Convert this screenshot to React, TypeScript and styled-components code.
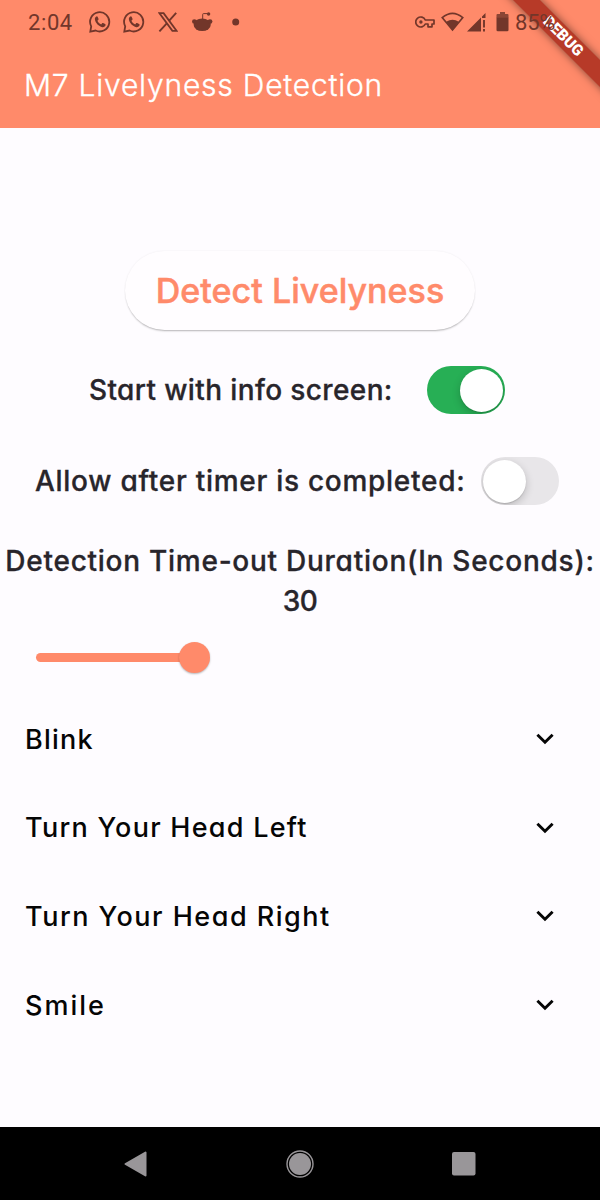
import React, { useState } from "react";
import styled, { createGlobalStyle } from "styled-components";

const CORAL = "#ff8a6a";
const STATUS = "#72362a";

const GlobalStyle = createGlobalStyle`
  *, *::before, *::after { box-sizing: border-box; }
  body { margin: 0; background: #fefcff; }
  button { font: inherit; border: 0; padding: 0; background: none; cursor: pointer; }
`;

const Screen = styled.div`
  position: relative;
  width: 600px;
  height: 1200px;
  display: flex;
  flex-direction: column;
  overflow: hidden;
  background: #fefcff;
  color: #28252b;
  font-family: Inter, "Open Sans", sans-serif;
  font-feature-settings: "cv11" 1;
  white-space: nowrap;
`;

const Header = styled.header`
  height: 128px;
  background: ${CORAL};
`;

const StatusBar = styled.div`
  position: relative;
  z-index: 2;
  height: 44px;
  padding: 0 43px 0 28px;
  display: flex;
  align-items: center;
  justify-content: space-between;
  color: ${STATUS};
  font-family: Roboto, sans-serif;
  font-size: 22px;
`;

const StatusGroup = styled.div`
  display: flex;
  align-items: center;
`;

const Clock = styled.span`
  width: 61px;
  letter-spacing: 0.6px;
`;

const Battery = styled.span`
  width: 42px;
  letter-spacing: -0.2px;
`;

const StatusIcon = styled.svg<{ $gap?: number }>`
  display: block;
  flex: none;
  margin-right: ${(p) => p.$gap ?? 0}px;
`;

const Title = styled.h1`
  margin: 0;
  padding-left: 24px;
  color: #fff;
  font-size: 30px;
  font-weight: 300;
  line-height: 82px;
  letter-spacing: 0.78px;
  -webkit-text-stroke: 0.35px #fff;
`;

const RibbonCorner = styled.div`
  position: absolute;
  z-index: 1;
  top: 0;
  right: 0;
  width: 120px;
  height: 120px;
  overflow: hidden;
  pointer-events: none;
`;

const Ribbon = styled.div`
  position: absolute;
  left: -17px;
  top: 27px;
  width: 200px;
  height: 19px;
  transform: rotate(45deg);
  background: #b73a28;
  box-shadow: 0 0 9px rgba(0, 0, 0, 0.5);
  color: #fff;
  font-family: Roboto, sans-serif;
  font-size: 15.5px;
  font-weight: 900;
  line-height: 19px;
  text-align: center;
`;

const Content = styled.main`
  flex: 1;
  display: flex;
  flex-direction: column;
  padding-top: 123px;
`;

const DetectButton = styled.button`
  && {
    align-self: center;
    width: 350px;
    height: 79px;
    border-radius: 40px;
    background: #fffdff;
    box-shadow: 0 2px 2px -1px rgba(0, 0, 0, 0.28), 0 0 2px rgba(0, 0, 0, 0.07);
    color: ${CORAL};
    font-size: 34px;
    font-weight: 500;
    letter-spacing: 0.03px;
    -webkit-text-stroke: 0.5px ${CORAL};
  }
`;

const SettingRow = styled.div<{ $top: number; $left: number; $gap: number }>`
  height: 48px;
  margin-top: ${(p) => p.$top}px;
  padding-left: ${(p) => p.$left}px;
  display: flex;
  align-items: center;
  gap: ${(p) => p.$gap}px;
`;

const Label = styled.span<{ $width: number; $spacing: number }>`
  width: ${(p) => p.$width}px;
  font-size: 28px;
  font-weight: 500;
  line-height: 44px;
  letter-spacing: ${(p) => p.$spacing}px;
  -webkit-text-stroke: 0.3px #28252b;
  padding-bottom: 1px;
`;

const Switch = styled.button<{ $on: boolean }>`
  && {
    display: flex;
    align-items: center;
    justify-content: ${(p) => (p.$on ? "flex-end" : "flex-start")};
    width: 78px;
    height: 48px;
    padding: ${(p) => (p.$on ? "0 2px 0 0" : "0 0 0 2px")};
    border-radius: 24px;
    overflow: hidden;
    background: ${(p) => (p.$on ? "#27af55" : "#e8e6e9")};
  }
`;

const Knob = styled.span`
  width: 43px;
  height: 43px;
  border-radius: 50%;
  background: #fff;
  box-shadow: 0 3px 9px rgba(0, 0, 0, 0.2), 0 1px 1px rgba(0, 0, 0, 0.12);
`;

const Timeout = styled.div`
  margin-top: 36px;
  text-align: center;
  font-size: 28px;
  font-weight: 500;
  line-height: 40px;
  -webkit-text-stroke: 0.3px #28252b;
`;

const TimeoutLine = styled.div<{ $spacing: number }>`
  letter-spacing: ${(p) => p.$spacing}px;
`;

const Slider = styled.div`
  display: flex;
  align-items: center;
  height: 31px;
  margin: 21px 0 0 36px;
`;

const Track = styled.div`
  width: 150px;
  height: 9px;
  border-radius: 5px;
  background: ${CORAL};
`;

const Thumb = styled.div`
  width: 31px;
  height: 31px;
  margin-left: -7px;
  border-radius: 50%;
  background: ${CORAL};
  box-shadow: 0 1px 2px rgba(0, 0, 0, 0.28);
`;

const List = styled.div`
  display: flex;
  flex-direction: column;
  margin-top: 22px;
`;

const ListItem = styled.button`
  && {
    display: flex;
    align-items: center;
    justify-content: space-between;
    height: 88.6px;
    padding: 0 46px 0 25px;
    color: #050505;
    font-size: 27px;
    font-weight: 500;
  }
`;

const ItemLabel = styled.span<{ $spacing: number }>`
  letter-spacing: ${(p) => p.$spacing}px;
`;

const NavBar = styled.nav`
  height: 73px;
  padding: 0 124px;
  display: flex;
  align-items: center;
  justify-content: space-between;
  background: #000;
`;

const WhatsApp = ({ gap }: { gap: number }) => (
  <StatusIcon $gap={gap} width="22" height="22" viewBox="0 0 22 22">
    <path d="M1.3 20.7 2.2 15.3A9.6 9.6 0 1 1 6.6 19.5Z" fill="none" stroke={STATUS} strokeWidth="1.8" />
    <path
      d="M7.5 5.4C6.3 5.9 5.6 7.1 5.9 8.6c.8 3.8 3.7 6.7 7.4 7.6 1.5.3 2.9-.6 3.3-2.1.1-.5-.1-.8-.5-1l-2-1c-.4-.2-.7-.1-1 .2l-.9 1.1c-1.7-.7-3-1.9-3.8-3.6l1-1.1c.2-.3.2-.6.1-.9l-.9-2c-.2-.4-.6-.6-1.1-.4Z"
      fill={STATUS}
    />
  </StatusIcon>
);

const XLogo = () => (
  <StatusIcon $gap={14} width="20" height="20" viewBox="0 0 20 20">
    <path d="M1.5 1.2h4.1l12.9 17.6h-4.1Z" fill="none" stroke={STATUS} strokeWidth="1.8" />
    <path d="M18.2.8 11 8.9M8.8 11.3 1.4 19.4" fill="none" stroke={STATUS} strokeWidth="1.9" />
  </StatusIcon>
);

const Reddit = () => (
  <StatusIcon $gap={19} width="21" height="20" viewBox="0 0 21 20">
    <ellipse cx="10.2" cy="12.8" rx="8.6" ry="6.3" fill={STATUS} />
    <circle cx="2.4" cy="9.6" r="2.4" fill={STATUS} />
    <circle cx="18" cy="9.6" r="2.4" fill={STATUS} />
    <path d="M10.7 7.5V2.4q0-.8.8-.8h4.2" fill="none" stroke={STATUS} strokeWidth="1" />
    <circle cx="16.6" cy="2" r="1.7" fill={STATUS} />
  </StatusIcon>
);

const Dot = () => (
  <StatusIcon width="8" height="8" viewBox="0 0 8 8">
    <circle cx="3.7" cy="4" r="3.5" fill={STATUS} />
  </StatusIcon>
);

const Key = () => (
  <StatusIcon $gap={6} width="20" height="12" viewBox="0 0 20 12">
    <path
      d="M10.3 4A5 5 0 1 0 10.3 8H13v2.8h4V8h2V4Z"
      fill="none"
      stroke={STATUS}
      strokeWidth="1.7"
      strokeLinejoin="round"
    />
    <circle cx="5.9" cy="6" r="1.7" fill={STATUS} />
  </StatusIcon>
);

const Wifi = () => (
  <StatusIcon $gap={3} width="23" height="20" viewBox="0 0 23 20">
    <path d="M1.2 5.6Q11.5-3 21.8 5.6L11.5 18Z" fill="none" stroke={STATUS} strokeWidth="1.6" />
    <path d="M5.2 9.8Q11.5 5.6 17.8 9.8L11.5 18.6Z" fill={STATUS} />
  </StatusIcon>
);

const Signal = () => (
  <StatusIcon $gap={10} width="19" height="19" viewBox="0 0 19 19">
    <path d="M0 18.5 14 4.5V18.5ZM15 3.5 18.5 0V5H15Z" fill={STATUS} />
    <path d="M17 7v7.5M17 16v2.5" stroke={STATUS} strokeWidth="1.9" />
  </StatusIcon>
);

const BatteryIcon = () => (
  <StatusIcon $gap={6} width="13" height="20" viewBox="0 0 13 20">
    <path d="M4 0h5v2h2.5q1 0 1 1v3H.5V3q0-1 1-1H4Z" fill={STATUS} opacity=".82" />
    <path d="M.5 5.8h12V18q0 1.3-1.3 1.3H1.8Q.5 19.3.5 18Z" fill={STATUS} />
  </StatusIcon>
);

const Chevron = () => (
  <svg width="18" height="12" viewBox="0 0 18 12">
    <path d="M1.4 1.7 9 9.2l7.6-7.5" fill="none" stroke="#050505" strokeWidth="2.9" />
  </svg>
);

const items = [
  { text: "Blink", spacing: 1.2 },
  { text: "Turn Your Head Left", spacing: 1.26 },
  { text: "Turn Your Head Right", spacing: 1.5 },
  { text: "Smile", spacing: 2 },
];

export default function App() {
  const [info, setInfo] = useState(true);
  const [allow, setAllow] = useState(false);
  return (
    <>
      <GlobalStyle />
      <Screen>
        <Header>
          <StatusBar>
            <StatusGroup>
              <Clock>2:04</Clock>
              <WhatsApp gap={12} />
              <WhatsApp gap={13} />
              <XLogo />
              <Reddit />
              <Dot />
            </StatusGroup>
            <StatusGroup>
              <Key />
              <Wifi />
              <Signal />
              <BatteryIcon />
              <Battery>85%</Battery>
            </StatusGroup>
          </StatusBar>
          <Title>M7 Livelyness Detection</Title>
        </Header>
        <Content>
          <DetectButton>Detect Livelyness</DetectButton>
          <SettingRow $top={36} $left={89} $gap={36}>
            <Label $width={302} $spacing={0.38}>Start with info screen:</Label>
            <Switch $on={info} aria-label="Start with info screen" onClick={() => setInfo(!info)}>
              <Knob />
            </Switch>
          </SettingRow>
          <SettingRow $top={43} $left={35} $gap={18}>
            <Label $width={428} $spacing={0.72}>Allow after timer is completed:</Label>
            <Switch $on={allow} aria-label="Allow after timer is completed" onClick={() => setAllow(!allow)}>
              <Knob />
            </Switch>
          </SettingRow>
          <Timeout>
            <TimeoutLine $spacing={0.74}>Detection Time-out Duration(In Seconds):</TimeoutLine>
            <TimeoutLine $spacing={-0.5}>30</TimeoutLine>
          </Timeout>
          <Slider>
            <Track />
            <Thumb />
          </Slider>
          <List>
            {items.map((item) => (
              <ListItem key={item.text}>
                <ItemLabel $spacing={item.spacing}>{item.text}</ItemLabel>
                <Chevron />
              </ListItem>
            ))}
          </List>
        </Content>
        <NavBar>
          <svg width="23" height="26" viewBox="0 0 23 26">
            <path d="M21.5 1.5v23L1.5 13Z" fill="#999699" stroke="#999699" strokeWidth="2" strokeLinejoin="round" />
          </svg>
          <svg width="28" height="28" viewBox="0 0 28 28">
            <circle cx="14" cy="14" r="13" fill="none" stroke="#999699" strokeWidth="1.4" />
            <circle cx="14" cy="14" r="11" fill="#999699" />
          </svg>
          <svg width="24" height="24" viewBox="0 0 24 24">
            <rect width="23.5" height="23.5" rx="2" fill="#999699" />
          </svg>
        </NavBar>
        <RibbonCorner>
          <Ribbon>DEBUG</Ribbon>
        </RibbonCorner>
      </Screen>
    </>
  );
}
